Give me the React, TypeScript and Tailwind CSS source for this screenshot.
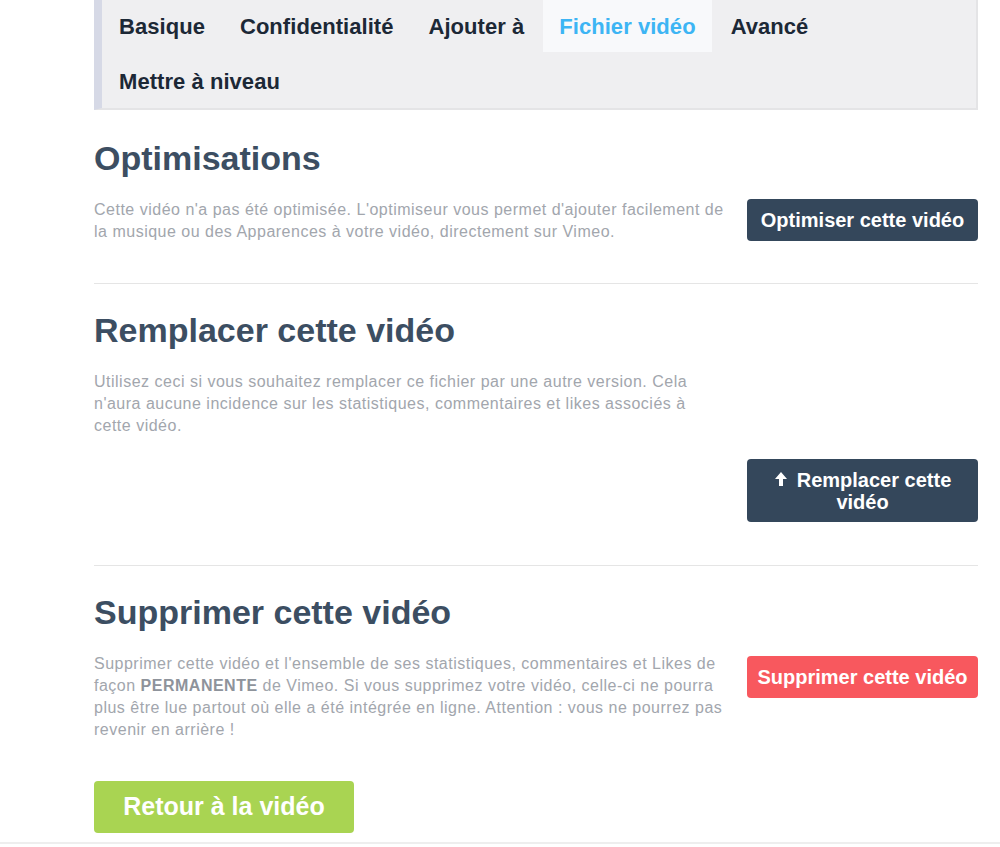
import React from "react";

const font = { fontFamily: '"Liberation Sans", Arial, sans-serif' };

function UpArrow() {
  return (
    <svg width="14" height="16" viewBox="0 0 14 16" className="inline-block mr-[9px] -mt-[4px]">
      <path d="M7 1 L13 8 L9 8 L9 15 L5 15 L5 8 L1 8 Z" fill="white" />
    </svg>
  );
}

export default function App() {
  const tabs = ["Basique", "Confidentialité", "Ajouter à", "Fichier vidéo", "Avancé", "Mettre à niveau"];
  return (
    <div className="w-[1000px] min-h-[847px] bg-white" style={font}>
      <div className="border-b-2 border-[#eeeeee]">
        <div className="ml-[94px] w-[884px] pb-[9px]">
          {/* Tabs */}
          <div className="bg-[#efeff1] border-l-[8px] border-[#d6d9e6] border-r-2 border-r-[#e4e4e6] border-b-2 border-b-[#e4e4e6] h-[110px] pl-[1px]">
            <div className="flex flex-wrap gap-x-[3px] gap-y-[3px] w-[780px]">
              {tabs.map((t) => (
                <div
                  key={t}
                  className={
                    "h-[52px] px-[16px] flex items-center text-[22px] tracking-[0.05px] font-bold " +
                    (t === "Fichier vidéo"
                      ? "bg-[#f8f9fb] text-[#3db5f4]"
                      : "text-[#1c2836]")
                  }
                >
                  {t}
                </div>
              ))}
            </div>
          </div>

          {/* Section 1 */}
          <div className="pt-[28px] pb-[40px] border-b border-[#e5e5e5]">
            <h2 className="text-[34px] leading-[40px] font-bold text-[#3c4e62]">Optimisations</h2>
            <div className="flex justify-between items-start mt-[21px]">
              <p className="w-[630px] text-[16px] tracking-[0.5px] leading-[22px] text-[#a2a6ad]">
                Cette vidéo n'a pas été optimisée. L'optimiseur vous permet d'ajouter facilement de la musique ou des Apparences à votre vidéo, directement sur Vimeo.
              </p>
              <button className="w-[231px] h-[42px] rounded-[4px] bg-[#34475b] text-white text-[20px] font-bold">
                Optimiser cette vidéo
              </button>
            </div>
          </div>

          {/* Section 2 */}
          <div className="pt-[26px] pb-[43px] border-b border-[#e5e5e5]">
            <h2 className="text-[34px] leading-[40px] font-bold text-[#3c4e62]">Remplacer cette vidéo</h2>
            <p className="mt-[21px] w-[630px] text-[16px] tracking-[0.5px] leading-[22px] text-[#a2a6ad]">
              Utilisez ceci si vous souhaitez remplacer ce fichier par une autre version. Cela n'aura aucune incidence sur les statistiques, commentaires et likes associés à cette vidéo.
            </p>
            <div className="flex justify-end mt-[22px]">
              <button className="w-[231px] h-[63px] rounded-[4px] bg-[#34475b] text-white text-[20px] leading-[22px] font-bold px-[18px]">
                <UpArrow />
                Remplacer cette vidéo
              </button>
            </div>
          </div>

          {/* Section 3 */}
          <div className="pt-[26px]">
            <h2 className="text-[34px] leading-[40px] font-bold text-[#3c4e62]">Supprimer cette vidéo</h2>
            <div className="flex justify-between items-start mt-[21px]">
              <p className="w-[630px] text-[16px] tracking-[0.5px] leading-[22px] text-[#a2a6ad]">
                Supprimer cette vidéo et l'ensemble de ses statistiques, commentaires et Likes de façon{" "}
                <b className="text-[#8e939b]">PERMANENTE</b> de Vimeo. Si vous supprimez votre vidéo, celle-ci ne pourra plus être lue partout où elle a été intégrée en ligne. Attention : vous ne pourrez pas revenir en arrière !
              </p>
              <button className="w-[231px] h-[42px] mt-[3px] rounded-[4px] bg-[#f8585e] text-white text-[20px] font-bold">
                Supprimer cette vidéo
              </button>
            </div>
            <button className="mt-[40px] w-[260px] h-[52px] rounded-[4px] bg-[#a9d452] text-white text-[25px] font-bold">
              Retour à la vidéo
            </button>
          </div>
        </div>
      </div>
    </div>
  );
}
